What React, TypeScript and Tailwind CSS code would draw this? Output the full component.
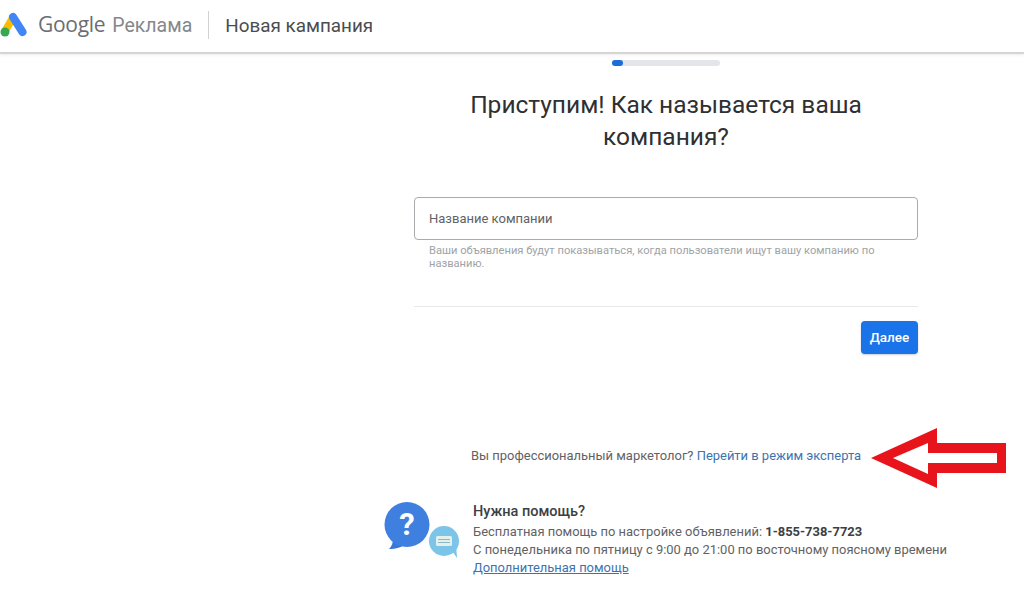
const App = () => {
  return (
    <div className="relative w-[1024px] h-[596px] overflow-hidden bg-white font-['Roboto',sans-serif] text-[#3c4043]">
      <header className="h-[54px] flex items-center border-b-2 border-[#d5d5d5] shadow-[0_1px_3px_rgba(0,0,0,0.08)]">
        <svg width="28" height="28" viewBox="0 0 28 28" className="mt-[-5px]">
          <path d="M5 21 L12.5 8.5" stroke="#fbbc04" strokeWidth="7.5" strokeLinecap="round" />
          <path d="M13 7 L22.5 22" stroke="#4285f4" strokeWidth="8" strokeLinecap="round" />
          <circle cx="5" cy="22" r="4.5" fill="#34a853" />
        </svg>
        <span className="ml-[10px] text-[21px] tracking-[-0.3px] text-[#6b6e71] font-['Open_Sans',sans-serif] mt-[-2px]">Google</span>
        <span className="ml-[7px] text-[19.5px] text-[#85888b] mt-[-1px]">Реклама</span>
        <div className="ml-[16px] w-px h-[28px] bg-[#d2d2d2] mt-[-2px]"></div>
        <span className="ml-[16px] text-[18.85px] text-[#4a4d50]">Новая кампания</span>
      </header>

      <main className="flex flex-col items-center pl-[308px]">
        <div className="mt-[6px] w-[108px] h-[6px] rounded-full bg-[#e3e5e8]">
          <div className="w-[11px] h-[6px] rounded-full bg-[#1a6dd6]"></div>
        </div>

        <h1 className="mt-[23px] w-[504px] text-center text-[24.5px] leading-[32px] text-[#2e3033] font-normal">
          Приступим! Как называется ваша<br />компания?
        </h1>

        <div className="mt-[44px] w-[504px]">
          <div className="h-[43px] flex items-center px-[14px] border border-[#a9abae] rounded-[4px] text-[13px] text-[#5f6368]">
            Название компании
          </div>
          <p className="mt-[4px] px-[15px] text-[11.15px] leading-[13px] text-[#a0a3a6]">
            Ваши объявления будут показываться, когда пользователи ищут вашу компанию по названию.
          </p>
          <div className="mt-[36px] h-px bg-[#e8e8e8]"></div>
          <div className="mt-[14px] flex justify-end">
            <button className="w-[57px] h-[33px] rounded-[4px] bg-[#1a73e8] text-white text-[13.5px] font-medium shadow-[0_1px_2px_rgba(0,0,0,0.2)]">
              Далее
            </button>
          </div>
        </div>

        <p className="mt-[94px] w-[504px] pl-[57px] text-[12.95px] leading-[16px] text-[#5f6265] whitespace-nowrap">
          Вы профессиональный маркетолог? <a className="text-[#3b73af]">Перейти в режим эксперта</a>
        </p>

        <div className="mt-[37px] w-[640px] flex pl-[38px]">
          <svg width="78" height="60" viewBox="0 0 78 60" className="mt-[1px]">
            <path d="M9 36 C9 41 8 44 5 47 C12 47 18 45 22 42 Z" fill="#3a78d8" />
            <circle cx="23" cy="22.5" r="22.5" fill="#3f7fe0" />
            <text x="23" y="33" textAnchor="middle" fontSize="31" fontWeight="700" fill="#ffffff" fontFamily="Roboto, sans-serif">?</text>
            <path d="M66 46 L73 56 L72 42 Z" fill="#7cc4e8" />
            <circle cx="60" cy="39" r="15" fill="#7cc4e8" />
            <rect x="52" y="34" width="16" height="10" rx="1.5" fill="#e3f1ea" />
            <rect x="54" y="37" width="12" height="1" fill="#8ab8c8" />
            <rect x="54" y="40" width="12" height="1" fill="#8ab8c8" />
          </svg>
          <div className="ml-[11px] text-[12.95px] leading-[18px] text-[#5f6265] whitespace-nowrap">
            <div className="text-[14.5px] font-medium leading-[22px] text-[#3c4043]">Нужна помощь?</div>
            <div>Бесплатная помощь по настройке объявлений: <span className="font-bold text-[#3c4043]">1-855-738-7723</span></div>
            <div>С понедельника по пятницу с 9:00 до 21:00 по восточному поясному времени</div>
            <a className="text-[#3b73af] underline">Дополнительная помощь</a>
          </div>
        </div>
      </main>

      {/* red arrow drawn over the screenshot */}
      <svg width="140" height="64" viewBox="0 0 140 64" className="absolute left-[868px] top-[426px]">
        <path
          fillRule="evenodd"
          d="M3 32 L69 2 L69 17 L138 17 L138 47 L69 47 L69 62 Z M25 32 L60 17 L60 27 L129 27 L129 37 L60 37 L60 48 Z"
          fill="#e8141c"
        />
      </svg>
    </div>
  );
};
export default App;
